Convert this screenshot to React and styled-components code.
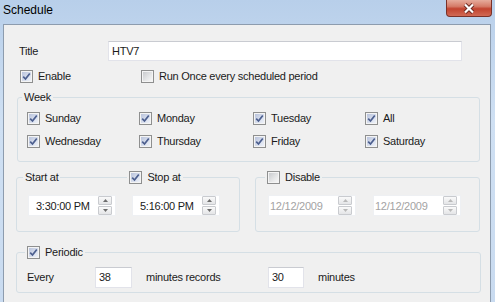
import React from "react";
import styled, { createGlobalStyle } from "styled-components";

const GlobalStyle = createGlobalStyle`
  *, *::before, *::after { box-sizing: border-box; }
  html, body { margin: 0; padding: 0; background: #c9dbf0; }
  body { font-family: "Liberation Sans", Arial, sans-serif; }
`;

const Window = styled.div`
  width: 495px;
  height: 302px;
  overflow: hidden;
  display: flex;
  flex-direction: column;
  background: linear-gradient(180deg, #b8cfea 0%, #cfe0f3 40%, #c9dbf0 100%);
`;

const TitleBar = styled.div`
  flex: none;
  height: 24px;
  display: flex;
  align-items: flex-start;
  justify-content: space-between;
`;

const Caption = styled.span`
  font-size: 12px;
  line-height: 14px;
  color: #000;
  padding: 3px 0 0 3px;
`;

const CloseButton = styled.div`
  width: 46px;
  height: 17px;
  margin-right: 3px;
  border: 1px solid #7a3128;
  border-top: none;
  border-radius: 0 0 4px 4px;
  background: linear-gradient(180deg, #e6ab9c 0%, #d57b68 40%, #c2432f 55%, #d16a55 100%);
  display: flex;
  align-items: center;
  justify-content: center;
`;

const Panel = styled.div`
  flex: none;
  margin: 0 4px 0 3px;
  border: 1px solid #8d9cae;
  background: #f0f0f0;
  padding: 16px 9px 20px 12px;
  display: flex;
  flex-direction: column;
  font-size: 11px;
  letter-spacing: -0.25px;
  color: #1b1b1b;
`;

const Row = styled.div`
  display: flex;
  align-items: center;
  margin-top: ${({ $top }) => $top || 0}px;
  padding-left: ${({ $indent }) => $indent || 0}px;
  gap: ${({ $gap }) => $gap || 0}px;
`;

const Label = styled.span`
  flex: none;
  width: ${({ $width }) => ($width ? `${$width}px` : "auto")};
  margin-left: ${({ $left }) => $left || 0}px;
  line-height: 13px;
  white-space: nowrap;
`;

const TextBox = styled.div`
  flex: none;
  width: ${({ $width }) => $width}px;
  height: ${({ $height }) => $height || 21}px;
  background: #fff;
  border: 1px solid #e2e3ea;
  border-top-color: #c9cbd1;
  padding-left: 3px;
  display: flex;
  align-items: center;
  line-height: 13px;
`;

const CheckItem = styled.label`
  display: flex;
  align-items: center;
  gap: 5px;
  width: ${({ $width }) => ($width ? `${$width}px` : "auto")};
  line-height: 13px;
  white-space: nowrap;
`;

const Box = styled.span`
  flex: none;
  width: 13px;
  height: 13px;
  border: 1px solid #8e8f8f;
  padding: 1px;
  background: #f4f4f4;
  display: flex;
`;

const BoxFill = styled.span`
  flex: 1;
  background: ${({ $checked }) =>
    $checked
      ? "linear-gradient(135deg, #b9c3dc 0%, #dfe5f1 70%, #eef1f8 100%)"
      : "linear-gradient(135deg, #c9cbce 0%, #e6e7e8 60%, #f6f6f6 100%)"};
  display: flex;
  align-items: center;
  justify-content: center;
`;

const GroupBox = styled.fieldset`
  margin: ${({ $top }) => $top || 0}px ${({ $side }) => $side || 0}px 0;
  padding: 0;
  min-width: 0;
  width: ${({ $width }) => ($width ? `${$width}px` : "auto")};
  border: 1px solid #d5dfe5;
  border-radius: 3px;
`;

const Legend = styled.legend`
  margin-left: ${({ $indent }) => $indent}px;
  padding: 0 2px;
  display: flex;
  align-items: center;
  line-height: 13px;
`;

const LegendRule = styled.span`
  flex: none;
  width: ${({ $width }) => $width}px;
  height: 1px;
  margin: 0 2px;
  background: #d5dfe5;
`;

const WeekGrid = styled.div`
  display: grid;
  grid-template-columns: 112px 114px 112px auto;
  row-gap: 10px;
  padding: 8px 0 13px 9px;
`;

const GroupRow = styled.div`
  display: flex;
  gap: 15px;
  margin-top: 9px;
`;

const GroupBody = styled.div`
  display: flex;
  align-items: center;
  gap: ${({ $gap }) => $gap || 0}px;
  padding: ${({ $pad }) => $pad};
`;

const SpinField = styled.div`
  flex: none;
  width: 88px;
  height: 21px;
  background: #fff;
  border: 1px solid #eef0f3;
  display: flex;
  align-items: center;
  justify-content: space-between;
  padding: 0 3px 0 ${({ $pad }) => $pad}px;
  color: ${({ $disabled }) => ($disabled ? "#a3a3a3" : "#1b1b1b")};
`;

const SpinButtons = styled.div`
  display: flex;
  flex-direction: column;
  gap: 1px;
`;

const SpinButton = styled.span`
  width: 14px;
  height: 9px;
  border: 1px solid #c9cbcf;
  border-radius: 1px;
  background: linear-gradient(180deg, #fafafa, #e4e5e7);
  display: flex;
  align-items: center;
  justify-content: center;
`;

function Check({ checked }) {
  return (
    <Box>
      <BoxFill $checked={checked}>
        {checked && (
          <svg width="9" height="9" viewBox="0 0 9 9">
            <path d="M1.2 4.6 L3.5 7 L7.8 1.4" fill="none" stroke="#4c5f8f" strokeWidth="1.7" />
          </svg>
        )}
      </BoxFill>
    </Box>
  );
}

function CheckField({ checked, label, width }) {
  return (
    <CheckItem $width={width}>
      <Check checked={checked} />
      <span>{label}</span>
    </CheckItem>
  );
}

function Arrow({ up, disabled }) {
  const color = disabled ? "#b9b9b9" : "#6d6d6d";
  return (
    <svg width="5" height="3" viewBox="0 0 5 3">
      <path d={up ? "M0 3 L2.5 0 L5 3 Z" : "M0 0 L2.5 3 L5 0 Z"} fill={color} />
    </svg>
  );
}

function Spinner({ value, disabled }) {
  return (
    <SpinField $disabled={disabled} $pad={disabled ? 1 : 7}>
      <span>{value}</span>
      <SpinButtons>
        <SpinButton>
          <Arrow up disabled={disabled} />
        </SpinButton>
        <SpinButton>
          <Arrow disabled={disabled} />
        </SpinButton>
      </SpinButtons>
    </SpinField>
  );
}

const days = [
  ["Sunday", "Monday", "Tuesday", "All"],
  ["Wednesday", "Thursday", "Friday", "Saturday"],
];

export default function App() {
  return (
    <Window>
      <GlobalStyle />
      <TitleBar>
        <Caption>Schedule</Caption>
        <CloseButton>
          <svg width="14" height="11" viewBox="0 0 14 11">
            <path d="M3 1.5 L11 9.5 M11 1.5 L3 9.5" stroke="#6b2a22" strokeWidth="4" />
            <path d="M3 1.5 L11 9.5 M11 1.5 L3 9.5" stroke="#fff" strokeWidth="2.2" />
          </svg>
        </CloseButton>
      </TitleBar>
      <Panel>
        <Row $indent={3}>
          <Label $width={89}>Title</Label>
          <TextBox $width={354} $height={20}>HTV7</TextBox>
        </Row>
        <Row $top={9} $indent={4}>
          <CheckField checked label="Enable" width={121} />
          <CheckField label="Run Once every scheduled period" />
        </Row>

        <GroupBox $top={8} $side={1}>
          <Legend $indent={4}>Week</Legend>
          <WeekGrid>
            {days.flat().map((d) => (
              <CheckField key={d} checked label={d} />
            ))}
          </WeekGrid>
        </GroupBox>

        <GroupRow>
          <GroupBox $width={224}>
            <Legend $indent={6}>
              <span>Start at</span>
              <LegendRule $width={67} />
              <CheckField checked label="Stop at" />
            </Legend>
            <GroupBody $gap={16} $pad="11px 0 15px 11px">
              <Spinner value="3:30:00 PM" />
              <Spinner value="5:16:00 PM" />
            </GroupBody>
          </GroupBox>
          <GroupBox $width={225}>
            <Legend $indent={9}>
              <CheckField label="Disable" />
            </Legend>
            <GroupBody $gap={17} $pad="11px 0 15px 12px">
              <Spinner value="12/12/2009" disabled />
              <Spinner value="12/12/2009" disabled />
            </GroupBody>
          </GroupBox>
        </GroupRow>

        <GroupBox $top={14}>
          <Legend $indent={8}>
            <CheckField checked label="Periodic" />
          </Legend>
          <GroupBody $pad="8px 0 4px 10px">
            <Label $width={68}>Every</Label>
            <TextBox $width={37}>38</TextBox>
            <Label $width={122} $left={14}>minutes records</Label>
            <TextBox $width={36}>30</TextBox>
            <Label $left={14}>minutes</Label>
          </GroupBody>
        </GroupBox>
      </Panel>
    </Window>
  );
}
